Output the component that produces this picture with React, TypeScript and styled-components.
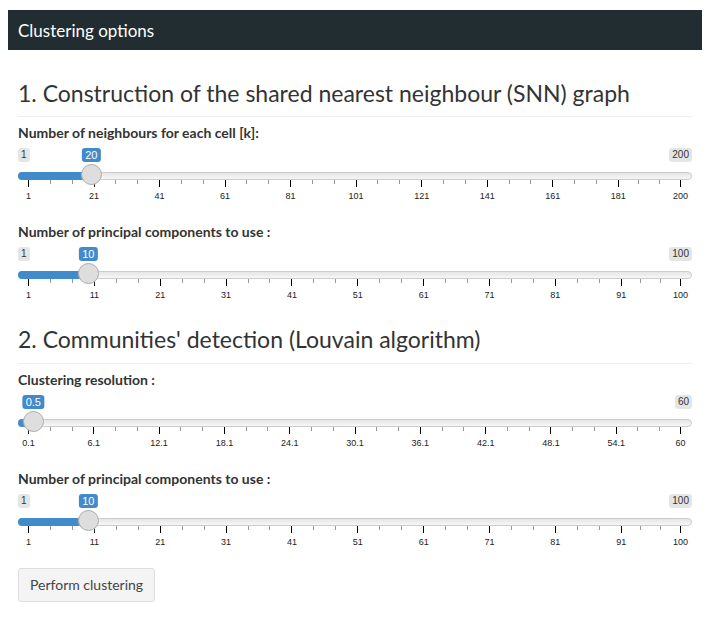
import React from "react";
import styled, { createGlobalStyle } from "styled-components";

const GlobalStyle = createGlobalStyle`
  *, *::before, *::after { box-sizing: border-box; }
  body {
    margin: 8px;
    font-family: "Lato", "Open Sans", sans-serif;
    color: #333;
    background: #fff;
  }
`;

const Page = styled.div`
  display: flex;
  flex-direction: column;
  padding-top: 2px;
`;

const BoxHeader = styled.div`
  height: 40px;
  background: #222d32;
  color: #fff;
  font-size: 17px;
  padding: 0 10px;
  display: flex;
  align-items: center;
`;

const BoxBody = styled.div`
  padding: 10px 10px;
`;

const SectionTitle = styled.h3`
  font-size: 23px;
  font-weight: 400;
  line-height: 26.4px;
  margin: 20px 0 6px;
  padding-bottom: 10px;
  border-bottom: 1px solid #eee;
  color: #333;
`;

const FormGroup = styled.div`
  margin-bottom: 15px;
`;

const Label = styled.label`
  display: block;
  font-weight: 700;
  font-size: 14px;
  line-height: 20px;
  margin-bottom: 5px;
`;

const SliderBox = styled.div`
  display: flex;
  flex-direction: column;
  height: 59px;
  font-family: "Liberation Sans", Arial, sans-serif;
`;

const TagRow = styled.div`
  position: relative;
  height: 14px;
  display: flex;
  justify-content: space-between;
  align-items: flex-start;
`;

const Tag = styled.span<{ $kind: "edge" | "single"; $hidden?: boolean }>`
  height: 14px;
  padding: 1px 3px;
  border-radius: 3px;
  white-space: nowrap;
  font-size: ${(p) => (p.$kind === "single" ? "11px" : "10px")};
  line-height: 12px;
  color: ${(p) => (p.$kind === "single" ? "#fff" : "#333")};
  background: ${(p) => (p.$kind === "single" ? "#428bca" : "rgba(0,0,0,0.1)")};
  visibility: ${(p) => (p.$hidden ? "hidden" : "visible")};
`;

const SingleTag = styled(Tag)`
  position: absolute;
  top: 0;
  transform: translateX(-50%);
  z-index: 3;
`;

const Track = styled.div`
  position: relative;
  margin-top: 10px;
  height: 8px;
  border: 1px solid #ccc;
  border-radius: 8px;
  background: linear-gradient(to bottom, #ddd -50%, #fff 150%);
`;

const Bar = styled.span`
  position: absolute;
  left: -1px;
  top: -1px;
  height: 8px;
  background: #428bca;
  border-radius: 8px 0 0 8px;
`;

const Handle = styled.span`
  position: absolute;
  top: -9px;
  width: 21px;
  height: 21px;
  margin-left: -11.5px;
  border: 1px solid #ababab;
  background: #dedede;
  border-radius: 50%;
  box-shadow: 1px 1px 3px rgba(255, 255, 255, 0.3);
  z-index: 2;
`;

const Grid = styled.div`
  position: relative;
  flex: 1;
`;

const Tick = styled.span<{ $small?: boolean }>`
  position: absolute;
  top: 0;
  width: 1px;
  height: ${(p) => (p.$small ? "4px" : "7px")};
  background: ${(p) => (p.$small ? "#999" : "#000")};
`;

const TickText = styled.span`
  position: absolute;
  top: 12px;
  font-size: 9px;
  line-height: 9px;
  color: #222;
  white-space: nowrap;
  transform: translateX(-50%);
`;

const Button = styled.button`
  font-family: "Lato", "Open Sans", sans-serif;
  font-size: 14px;
  line-height: 20px;
  padding: 6px 11px;
  background: #f4f4f4;
  border: 1px solid #ddd;
  border-radius: 3px;
  color: #444;
  cursor: pointer;
`;

type SliderProps = {
  min: number;
  max: number;
  value: number;
  majors: number[];
  showMin?: boolean;
};

const frac = (v: number, min: number, max: number) => (v - min) / (max - min);
const tickLeft = (f: number) => `calc(10px + (100% - 22px) * ${f})`;
const centerLeft = (f: number) => `calc(11px + (100% - 22px) * ${f})`;

function Slider({ min, max, value, majors, showMin = true }: SliderProps) {
  const fv = frac(value, min, max);
  const minors: number[] = [];
  for (let i = 0; i < majors.length - 1; i++) {
    const a = majors[i];
    const b = majors[i + 1];
    minors.push(a + (b - a) / 3, a + (2 * (b - a)) / 3);
  }
  return (
    <SliderBox>
      <TagRow>
        <Tag $kind="edge" $hidden={!showMin}>
          {min}
        </Tag>
        <Tag $kind="edge">{max}</Tag>
        <SingleTag $kind="single" style={{ left: centerLeft(fv) }}>
          {value}
        </SingleTag>
      </TagRow>
      <Track>
        <Bar style={{ width: centerLeft(fv) }} />
        <Handle style={{ left: centerLeft(fv) }} />
      </Track>
      <Grid>
        {minors.map((m, i) => (
          <Tick key={"s" + i} $small style={{ left: tickLeft(frac(m, min, max)) }} />
        ))}
        {majors.map((m, i) => (
          <Tick key={"b" + i} style={{ left: tickLeft(frac(m, min, max)) }} />
        ))}
        {majors.map((m, i) => (
          <TickText key={"t" + i} style={{ left: `calc(10.5px + (100% - 22px) * ${frac(m, min, max)})` }}>
            {m}
          </TickText>
        ))}
      </Grid>
    </SliderBox>
  );
}

const range = (start: number, step: number, count: number, last: number, dec = 0) => {
  const out: number[] = [];
  for (let i = 0; i < count; i++) out.push(Number((start + step * i).toFixed(dec)));
  out.push(last);
  return out;
};

const ticks200 = range(1, 20, 10, 200);
const ticks100 = range(1, 10, 10, 100);
const ticks60 = range(0.1, 6, 10, 60, 1);

export default function App() {
  return (
    <Page>
      <GlobalStyle />
      <BoxHeader>Clustering options</BoxHeader>
      <BoxBody>
        <SectionTitle>1. Construction of the shared nearest neighbour (SNN) graph</SectionTitle>
        <FormGroup>
          <Label>Number of neighbours for each cell [k]:</Label>
          <Slider min={1} max={200} value={20} majors={ticks200} />
        </FormGroup>
        <FormGroup>
          <Label>Number of principal components to use :</Label>
          <Slider min={1} max={100} value={10} majors={ticks100} />
        </FormGroup>
        <SectionTitle>2. Communities' detection (Louvain algorithm)</SectionTitle>
        <FormGroup>
          <Label>Clustering resolution :</Label>
          <Slider min={0.1} max={60} value={0.5} majors={ticks60} showMin={false} />
        </FormGroup>
        <FormGroup>
          <Label>Number of principal components to use :</Label>
          <Slider min={1} max={100} value={10} majors={ticks100} />
        </FormGroup>
        <Button>Perform clustering</Button>
      </BoxBody>
    </Page>
  );
}
